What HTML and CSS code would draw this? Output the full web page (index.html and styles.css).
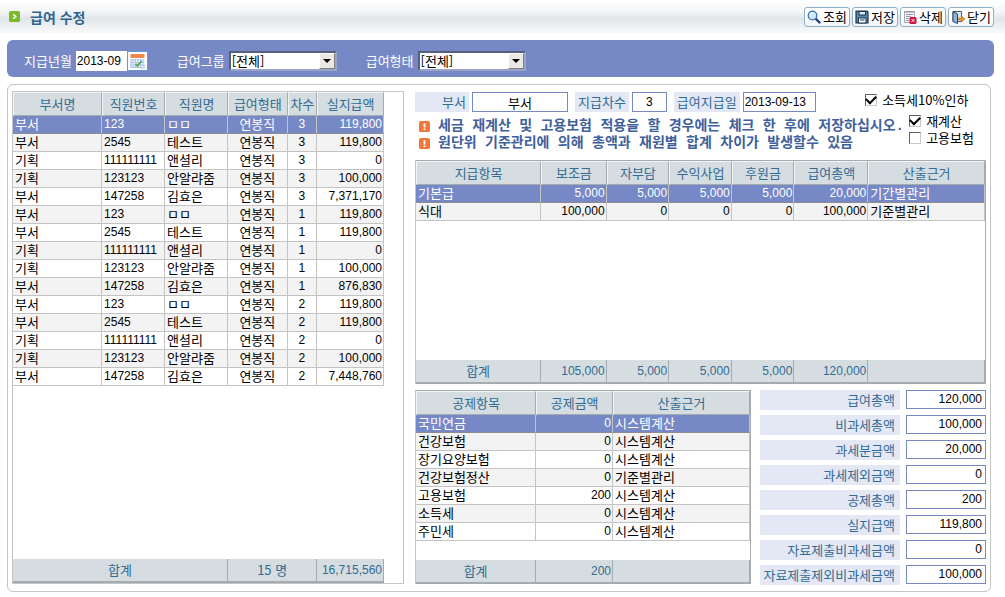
FILE: index.html
```html
<!DOCTYPE html>
<html lang="ko">
<head>
<meta charset="utf-8">
<title>급여 수정</title>
<link rel="stylesheet" href="styles.css">
</head>
<body>
<header class="titlebar">
  <svg class="title-icon" viewBox="0 0 12 12" aria-hidden="true"><rect width="12" height="12" rx="2" fill="#7cb82c"/><path d="M4.5 3.5 7.5 6 4.5 8.500" fill="none" stroke="#fff" stroke-width="1.500"/></svg>
  <h1>급여 수정</h1>
  <div class="actions">
    <button type="button"><svg viewBox="0 0 14 14" aria-hidden="true"><path d="m8.500 8.500 4 4" stroke="#1f3c78" stroke-width="2.400" stroke-linecap="round"/><circle cx="5.500" cy="5.500" r="4.300" fill="#cdeafa" stroke="#3a6fae" stroke-width="1.300"/><path d="M3.300 5a2.300 2.300 0 0 1 2-2" fill="none" stroke="#fff"/></svg>조회</button>
    <button type="button"><svg viewBox="0 0 14 14" aria-hidden="true"><path d="M1 1h11l1 1v11H1z" fill="#5f86a8" stroke="#16324f" stroke-width="1.200"/><path d="M4 1.500h6.500V5H4z" fill="#dcebf5" stroke="#16324f"/><path d="M3.500 8h7.500v5H3.500z" fill="#fff" stroke="#16324f"/><path d="M5 10h4.500" stroke="#16324f"/></svg>저장</button>
    <button type="button"><svg viewBox="0 0 14 14" aria-hidden="true"><path d="M1.500 1.500h10v11h-10z" fill="#f4f4f8" stroke="#a9a9b8"/><path d="M1.500 2h10" stroke="#8a8a9c"/><path d="M3 4.500h7M3 6.500h5M3 8.500h3M3 10.500h3" stroke="#9a9ab0"/><rect x="6.500" y="7" width="7" height="7" rx="1.500" fill="#d4103c"/><path d="m8.500 9 3 3m0-3-3 3" stroke="#fff"/></svg>삭제</button>
    <button type="button"><svg viewBox="0 0 14 14" aria-hidden="true"><path d="M2 1.500h8.500v10H2z" fill="#dce6f0" stroke="#4a5a78"/><path d="M2 1.500 6.500 4v9.500L2 11.500z" fill="#8cb4dc" stroke="#2c4468"/><path d="M7.500 8h3V6l3.500 3-3.500 3v-2h-3z" fill="#f0a030" stroke="#a86410" stroke-width=".6"/></svg>닫기</button>
  </div>
</header>

<form class="filters">
  <div class="filter">
    <label for="month">지급년월</label>
    <input id="month" class="month" type="text" value="2013-09">
    <button class="calendar" type="button" aria-label="달력"><svg viewBox="0 0 18 18" aria-hidden="true"><path d="M1 1h16v16H1z" fill="#fff"/><path d="M2 2h14v4H2z" fill="#f5854a"/><path d="M2 8h14M2 10.500h14M2 13h14M2 15.500h14M2.500 7v9M4.500 7v9M7 7v9M9.500 7v9M12 7v9M14.500 7v9" stroke="#a9c4e6"/><path d="m7 12 2 2 4-5" fill="none" stroke="#5fa66a" stroke-width="2"/><path d="m12 17 5-5v5z" fill="#cfe0f4"/></svg></button>
  </div>
  <div class="filter">
    <label for="group">급여그룹</label>
    <span class="select"><select id="group"><option>[전체]</option></select><span class="arrow"></span></span>
  </div>
  <div class="filter">
    <label for="type">급여형태</label>
    <span class="select"><select id="type"><option>[전체]</option></select><span class="arrow"></span></span>
  </div>
</form>

<main class="panel">
  <section class="staff">
    <table class="grid">
      <colgroup><col class="s-dept"><col class="s-no"><col class="s-name"><col class="s-type"><col class="s-seq"><col class="s-pay"></colgroup>
      <thead><tr><th>부서명</th><th>직원번호</th><th>직원명</th><th>급여형태</th><th>차수</th><th>실지급액</th></tr></thead>
      <tbody>
        <tr class="selected"><td>부서</td><td class="code">123</td><td>ㅁㅁ</td><td class="mid">연봉직</td><td class="mid code">3</td><td class="num">119,800</td></tr>
        <tr><td>부서</td><td class="code">2545</td><td>테스트</td><td class="mid">연봉직</td><td class="mid code">3</td><td class="num">119,800</td></tr>
        <tr><td>기획</td><td class="code">111111111</td><td>앤셜리</td><td class="mid">연봉직</td><td class="mid code">3</td><td class="num">0</td></tr>
        <tr><td>기획</td><td class="code">123123</td><td>안알랴줌</td><td class="mid">연봉직</td><td class="mid code">3</td><td class="num">100,000</td></tr>
        <tr><td>부서</td><td class="code">147258</td><td>김효은</td><td class="mid">연봉직</td><td class="mid code">3</td><td class="num">7,371,170</td></tr>
        <tr><td>부서</td><td class="code">123</td><td>ㅁㅁ</td><td class="mid">연봉직</td><td class="mid code">1</td><td class="num">119,800</td></tr>
        <tr><td>부서</td><td class="code">2545</td><td>테스트</td><td class="mid">연봉직</td><td class="mid code">1</td><td class="num">119,800</td></tr>
        <tr><td>기획</td><td class="code">111111111</td><td>앤셜리</td><td class="mid">연봉직</td><td class="mid code">1</td><td class="num">0</td></tr>
        <tr><td>기획</td><td class="code">123123</td><td>안알랴줌</td><td class="mid">연봉직</td><td class="mid code">1</td><td class="num">100,000</td></tr>
        <tr><td>부서</td><td class="code">147258</td><td>김효은</td><td class="mid">연봉직</td><td class="mid code">1</td><td class="num">876,830</td></tr>
        <tr><td>부서</td><td class="code">123</td><td>ㅁㅁ</td><td class="mid">연봉직</td><td class="mid code">2</td><td class="num">119,800</td></tr>
        <tr><td>부서</td><td class="code">2545</td><td>테스트</td><td class="mid">연봉직</td><td class="mid code">2</td><td class="num">119,800</td></tr>
        <tr><td>기획</td><td class="code">111111111</td><td>앤셜리</td><td class="mid">연봉직</td><td class="mid code">2</td><td class="num">0</td></tr>
        <tr><td>기획</td><td class="code">123123</td><td>안알랴줌</td><td class="mid">연봉직</td><td class="mid code">2</td><td class="num">100,000</td></tr>
        <tr><td>부서</td><td class="code">147258</td><td>김효은</td><td class="mid">연봉직</td><td class="mid code">2</td><td class="num">7,448,760</td></tr>
        <tr class="filler"><td colspan="6"></td></tr>
      </tbody>
      <tfoot><tr><td class="mid" colspan="3">합계</td><td class="mid" colspan="2">15 명</td><td class="num">16,715,560</td></tr></tfoot>
    </table>
  </section>

  <section class="detail">
    <div class="info">
      <div class="info-main">
        <div class="fields">
          <label class="tag tag-dept" for="dept">부서</label><input id="dept" class="box box-dept" type="text" value="부서">
          <label class="tag" for="seq">지급차수</label><input id="seq" class="box box-seq" type="text" value="3">
          <label class="tag" for="payday">급여지급일</label><input id="payday" class="box box-date" type="text" value="2013-09-13">
        </div>
        <ul class="notices">
          <li><svg viewBox="0 0 12 12" aria-hidden="true"><rect width="12" height="12" rx="2" fill="#f0783c"/><path d="M6 2.500V7M6 8.300v1.500" stroke="#fff" stroke-width="2"/></svg>세금 재계산 및 고용보험 적용을 할 경우에는 체크 한 후에 저장하십시오.</li>
          <li><svg viewBox="0 0 12 12" aria-hidden="true"><rect width="12" height="12" rx="2" fill="#f0783c"/><path d="M6 2.500V7M6 8.300v1.500" stroke="#fff" stroke-width="2"/></svg>원단위 기준관리에 의해 총액과 재원별 합계 차이가 발생할수 있음</li>
        </ul>
      </div>
      <div class="checks">
        <label class="check check-tax"><input type="checkbox" checked>소득세10%인하</label>
        <label class="check"><input type="checkbox" checked>재계산</label>
        <label class="check"><input type="checkbox">고용보험</label>
      </div>
    </div>

    <div class="pay">
      <table class="grid boxed">
        <colgroup><col class="p-item"><col class="p-aid"><col class="p-a"><col class="p-a"><col class="p-a"><col class="p-sum"><col></colgroup>
        <thead><tr><th>지급항목</th><th>보조금</th><th>자부담</th><th>수익사업</th><th>후원금</th><th>급여총액</th><th>산출근거</th></tr></thead>
        <tbody>
          <tr class="selected"><td>기본급</td><td class="num">5,000</td><td class="num">5,000</td><td class="num">5,000</td><td class="num">5,000</td><td class="num">20,000</td><td>기간별관리</td></tr>
          <tr><td>식대</td><td class="num">100,000</td><td class="num">0</td><td class="num">0</td><td class="num">0</td><td class="num">100,000</td><td>기준별관리</td></tr>
          <tr class="filler"><td colspan="7"></td></tr>
        </tbody>
        <tfoot><tr><td class="mid">합계</td><td class="num">105,000</td><td class="num">5,000</td><td class="num">5,000</td><td class="num">5,000</td><td class="num">120,000</td><td></td></tr></tfoot>
      </table>
    </div>

    <div class="lower">
      <div class="deduct">
        <table class="grid boxed">
          <colgroup><col class="d-item"><col class="d-amt"><col class="d-base"></colgroup>
          <thead><tr><th>공제항목</th><th>공제금액</th><th>산출근거</th></tr></thead>
          <tbody>
            <tr class="selected"><td>국민연금</td><td class="num">0</td><td>시스템계산</td></tr>
            <tr><td>건강보험</td><td class="num">0</td><td>시스템계산</td></tr>
            <tr><td>장기요양보험</td><td class="num">0</td><td>시스템계산</td></tr>
            <tr><td>건강보험정산</td><td class="num">0</td><td>기준별관리</td></tr>
            <tr><td>고용보험</td><td class="num">200</td><td>시스템계산</td></tr>
            <tr><td>소득세</td><td class="num">0</td><td>시스템계산</td></tr>
            <tr><td>주민세</td><td class="num">0</td><td>시스템계산</td></tr>
            <tr class="filler"><td colspan="3"></td></tr>
          </tbody>
          <tfoot><tr><td class="mid">합계</td><td class="num">200</td><td></td></tr></tfoot>
        </table>
      </div>
      <div class="totals">
        <label for="t1">급여총액</label><input id="t1" type="text" value="120,000">
        <label for="t2">비과세총액</label><input id="t2" type="text" value="100,000">
        <label for="t3">과세분금액</label><input id="t3" type="text" value="20,000">
        <label for="t4">과세제외금액</label><input id="t4" type="text" value="0">
        <label for="t5">공제총액</label><input id="t5" type="text" value="200">
        <label for="t6">실지급액</label><input id="t6" type="text" value="119,800">
        <label for="t7">자료제출비과세금액</label><input id="t7" type="text" value="0">
        <label for="t8">자료제출제외비과세금액</label><input id="t8" type="text" value="100,000">
      </div>
    </div>
  </section>
</main>
</body>
</html>
```

FILE: styles.css
```css
* { box-sizing: border-box; }

html, body { height: 100%; }

body {
  margin: 0;
  display: flex;
  flex-direction: column;
  background: #fff;
  color: #000;
  font: 13px/16px "Noto Sans CJK KR", sans-serif;
}

button, input, select { font: inherit; color: inherit; }

/* Figures are set in a narrower face than the labels */
.month, .box-seq, .box-date, .totals input, .grid .num, .grid .code {
  font-family: "Liberation Sans", "Noto Sans CJK KR", sans-serif;
  font-size: 12px;
}

/* Title bar */
.titlebar {
  display: flex;
  align-items: center;
  gap: 10px;
  flex: none;
  height: 33px;
  padding: 0 11px 0 9px;
  background: linear-gradient(#fff 0, #f1f4f5 40%, #e0e5e8 58%, #eceff1 75%, #f8f9fa 100%);
}
.title-icon { width: 11px; height: 11px; }
h1 {
  margin: 0;
  font-size: 14px;
  line-height: 18px;
  color: #2f6690;
}
.actions { display: flex; gap: 2px; margin-left: auto; }
.actions button {
  display: flex;
  align-items: center;
  justify-content: center;
  gap: 2px;
  width: 46px;
  height: 20px;
  padding: 0;
  border: 1px solid #8fb0c8;
  border-radius: 3px;
  background: linear-gradient(#fff 60%, #eef2f5);
  font-size: 13px;
  white-space: nowrap;
}
.actions svg { flex: none; width: 14px; height: 14px; }

/* Search conditions */
.filters {
  display: flex;
  align-items: center;
  flex: none;
  height: 37px;
  margin: 7px 11px 7px 7px;
  padding: 5px 17px 0;
  border-radius: 6px;
  background: #7689c6;
  color: #fff;
}
.filter { display: flex; align-items: center; gap: 4px; }
.filter + .filter { margin-left: 29px; }
.filter label { white-space: nowrap; }
.month {
  width: 51px;
  height: 20px;
  padding: 0 1px;
  border: 0;
  background: #fff;
  color: #000;
}
.calendar {
  width: 21px;
  height: 20px;
  margin-left: -4px;
  padding: 0;
  border: 1px solid #6f96d0;
  background: #fff;
}
.calendar svg { display: block; width: 19px; height: 18px; }
.select { position: relative; width: 108px; }
.select select {
  display: block;
  width: 100%;
  height: 20px;
  padding: 0 20px 0 1px;
  border: 2px solid;
  border-color: #56607c #9aa4c4 #9aa4c4 #56607c;
  border-radius: 0;
  appearance: none;
  background: #fff;
  color: #000;
  line-height: 16px;
}
.arrow {
  position: absolute;
  top: 2px;
  right: 2px;
  display: grid;
  place-items: center;
  width: 16px;
  height: 16px;
  border: 1px solid;
  border-color: #fff #808080 #808080 #fff;
  background: #ece9e4;
  pointer-events: none;
}
.arrow::after {
  content: "";
  border: 4px solid transparent;
  border-top-color: #000;
  border-bottom: 0;
}

/* Main panel */
.panel {
  display: grid;
  grid-template-columns: 392fr 571fr;
  gap: 11px;
  flex: 1 0 auto;
  margin: 0 14px 6px 7px;
  padding: 6px 4px 7px;
  border: 1px solid #c4c4c4;
  border-radius: 6px;
}

/* Data grids */
.grid {
  width: 100%;
  height: 100%;
  table-layout: fixed;
  border-spacing: 0;
  white-space: nowrap;
}
.grid th {
  height: 24px;
  padding: 0;
  border: 1px solid;
  border-color: #f2f5f6 #a4acb0 #a4acb0 #f2f5f6;
  background: #d5dde0;
  color: #336b94;
  font-weight: normal;
}
.grid td {
  height: 18px;
  padding: 0 2px 1px;
  border-right: 1px solid #c4c4c4;
  border-bottom: 1px solid #c4c4c4;
  line-height: 16px;
  text-align: left;
}
.grid tbody tr:nth-child(even) td { background: #f3f3f3; }
.grid tbody tr.selected td {
  background: #7689c6;
  border-bottom-color: #8f8a90;
  color: #fff;
}
.grid .mid { text-align: center; }
.grid .num { padding-right: 1px; text-align: right; }
.grid tbody tr.filler td {
  height: auto;
  padding: 0;
  border: 0;
  background: #fff;
}
.grid tfoot td {
  height: 24px;
  border-right-color: #a4acb0;
  border-bottom: 2px solid #a4acb0;
  background: #d5dde0;
  color: #336b94;
}

.staff {
  padding-right: 19px;
  border: 1px solid #c4c4c4;
}
.s-dept { width: 24%; }
.s-no, .s-name { width: 17%; }
.s-type { width: 16%; }
.s-seq { width: 8%; }
.s-pay { width: 18%; }

.detail {
  display: flex;
  flex-direction: column;
  min-width: 0;
}

/* Payment info */
.info {
  display: flex;
  height: 69px;
  white-space: nowrap;
}
.info-main { flex: 1; min-width: 0; }
.fields {
  display: flex;
  align-items: center;
  height: 22px;
}
.tag {
  height: 20px;
  padding: 0 3px;
  background: #e3e8f4;
  color: #336b94;
  line-height: 20px;
}
.tag-dept { width: 54px; text-align: right; }
.box {
  height: 20px;
  margin: 0 7px 0 3px;
  padding: 0;
  border: 1px solid #7689c0;
  background: #fff;
  text-align: center;
}
.box-dept { width: 96px; }
.box-seq { width: 35px; }
.box-date { width: 73px; padding-left: 1px; text-align: left; }
.notices {
  margin: 5px 0 0;
  padding: 0 0 0 4px;
  list-style: none;
  color: #40609c;
  font: bold 14px/17px "Liberation Mono", "Noto Sans CJK KR", monospace;
}
.notices li { display: flex; align-items: center; gap: 8px; }
.notices svg { flex: none; width: 11px; height: 11px; }
.checks { flex: none; padding-right: 12px; }
.check {
  display: flex;
  align-items: center;
  gap: 5px;
  margin-left: 44px;
  line-height: 17px;
}
.check-tax { margin: 0 0 4px; }
.check input {
  display: grid;
  place-items: center;
  width: 12px;
  height: 12px;
  margin: 0;
  border: 1px solid;
  border-color: #606060 #c8c8c8 #c8c8c8 #606060;
  appearance: none;
  background: #fff;
}
.check input:checked::before {
  content: "";
  width: 8px;
  height: 5px;
  margin-bottom: 3px;
  border: solid #000;
  border-width: 0 0 2px 2px;
  transform: rotate(-45deg);
}

.pay { flex: 1 0 224px; display: grid; }
.boxed { border: 1px solid #a4acb0; border-width: 1px 1px 0; border-left-color: #c4c4c4; }
.p-item { width: 22%; }
.p-aid { width: 11.5%; }
.p-a { width: 11%; }
.p-sum { width: 13%; }

.lower {
  display: flex;
  gap: 9px;
  height: 194px;
  margin-top: 6px;
}
.deduct { flex: 1; display: grid; }
.d-item { width: 36%; }
.d-amt { width: 23%; }
.d-base { width: 41%; }

.totals {
  display: grid;
  grid-template-columns: 140px 80px;
  grid-auto-rows: 20px;
  gap: 5px 6px;
}
.totals label {
  padding-right: 5px;
  background: #e3e8f4;
  color: #336b94;
  line-height: 20px;
  text-align: right;
  white-space: nowrap;
}
.totals input {
  width: 100%;
  height: 19px;
  padding: 0 3px 2px;
  border: 1px solid #7689c0;
  background: #fff;
  text-align: right;
}
```
